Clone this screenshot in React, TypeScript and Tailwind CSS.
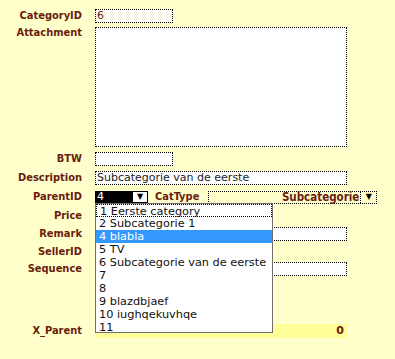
import React from "react"

const font = "font-['DejaVu_Sans','Verdana',sans-serif]"
const labelCls =
  "w-[82px] shrink-0 text-right font-bold text-[11px] leading-[14px] text-[#6b1c0c] font-['DejaVu_Sans_Condensed','DejaVu_Sans',sans-serif] [font-stretch:condensed]"
const boxCls = "h-[14px] border border-dotted border-black"

const parents = [
  "1 Eerste category",
  "2 Subcategorie 1",
  "4 blabla",
  "5 TV",
  "6 Subcategorie van de eerste",
  "7",
  "8",
  "9 blazdbjaef",
  "10 iughqekuvhqe",
  "11",
]

function Row({ label, className = "", children }: { label: string; className?: string; children?: React.ReactNode }) {
  return (
    <div className={`flex items-center h-[14px] ${className}`}>
      <div className={labelCls}>{label}</div>
      <div className="ml-[13px] flex items-center">{children}</div>
    </div>
  )
}

export default function App() {
  return (
    <div className={`relative w-[395px] h-[359px] bg-[#ffffcc] pt-[9px] overflow-hidden ${font}`}>
      <Row label="CategoryID">
        <div className={`${boxCls} w-[78px] bg-[#fdfdf4] text-[11px] leading-[12px] pl-[1px] text-[#6b1c0c]`}>6</div>
      </Row>

      <div className="flex mt-[4px]">
        <div className={`${labelCls} -mt-[1px]`}>Attachment</div>
        <div className="ml-[13px] w-[252px] h-[120px] bg-white border border-dotted border-black" />
      </div>

      <Row label="BTW" className="mt-[5px]">
        <div className={`${boxCls} w-[78px] bg-white`} />
      </Row>

      <Row label="Description" className="mt-[5px]">
        <div className={`${boxCls} w-[252px] bg-white text-[11px] leading-[12px] pl-[1px] text-[#222]`}>
          Subcategorie van de eerste
        </div>
      </Row>

      <Row label="ParentID" className="mt-[5px]">
        <div className="flex items-center h-[12px] w-[53px] bg-black">
          <span className="flex-1 pl-[2px] text-[11px] leading-[12px] text-white">4</span>
          <span className="w-[14px] h-[10px] mr-[1px] bg-white flex items-center justify-center text-[8px] leading-none text-black">▼</span>
        </div>
        <div className={`${labelCls} w-auto ml-[7px] text-[11.5px]`}>CatType</div>
        <div className="ml-[9px] flex items-center h-[13px] w-[169px] border border-dotted border-black">
          <span className="flex-1 text-right pr-[1px] font-bold text-[11.5px] leading-[12px] text-[#6b1c0c] font-['DejaVu_Sans_Condensed','DejaVu_Sans',sans-serif] [font-stretch:condensed]">
            Subcategorie
          </span>
          <span className="w-[16px] h-full border-l border-dotted border-black flex items-center justify-center text-[8px] leading-none text-black">▼</span>
        </div>
      </Row>

      <Row label="Price" className="mt-[5px]">
        <div className={`${boxCls} w-[78px] bg-white`} />
      </Row>

      <Row label="Remark" className="mt-[4px]">
        <div className={`${boxCls} w-[252px] bg-white`} />
      </Row>

      <Row label="SellerID" className="mt-[4px]">
        <div className={`${boxCls} w-[78px] bg-white`} />
      </Row>

      <Row label="Sequence" className="mt-[3px]">
        <div className={`${boxCls} w-[252px] bg-white`} />
      </Row>

      <div className="flex items-center h-[14px] mt-[48px]">
        <div className={labelCls}>X_Parent</div>
        <div className="ml-[13px] w-[252px] h-[14px] bg-[#ffff99] flex items-center justify-end pr-[3px] font-bold text-[11px] leading-[14px] text-[#6b1c0c]">
          0
        </div>
      </div>

      <div className="absolute left-[95px] top-[203px] w-[178px] h-[130px] bg-white border border-[#6e6e6e] overflow-hidden">
        {parents.map((p, i) => (
          <div
            key={p}
            className={`h-[13px] pl-[3px] text-[11.3px] leading-[13px] whitespace-nowrap ${
              i === 2 ? "bg-[#3399ff] text-white" : "text-[#111]"
            } ${i === 0 ? "border border-dotted border-black pl-[2px] leading-[11px]" : ""}`}
          >
            {p}
          </div>
        ))}
      </div>
    </div>
  )
}
